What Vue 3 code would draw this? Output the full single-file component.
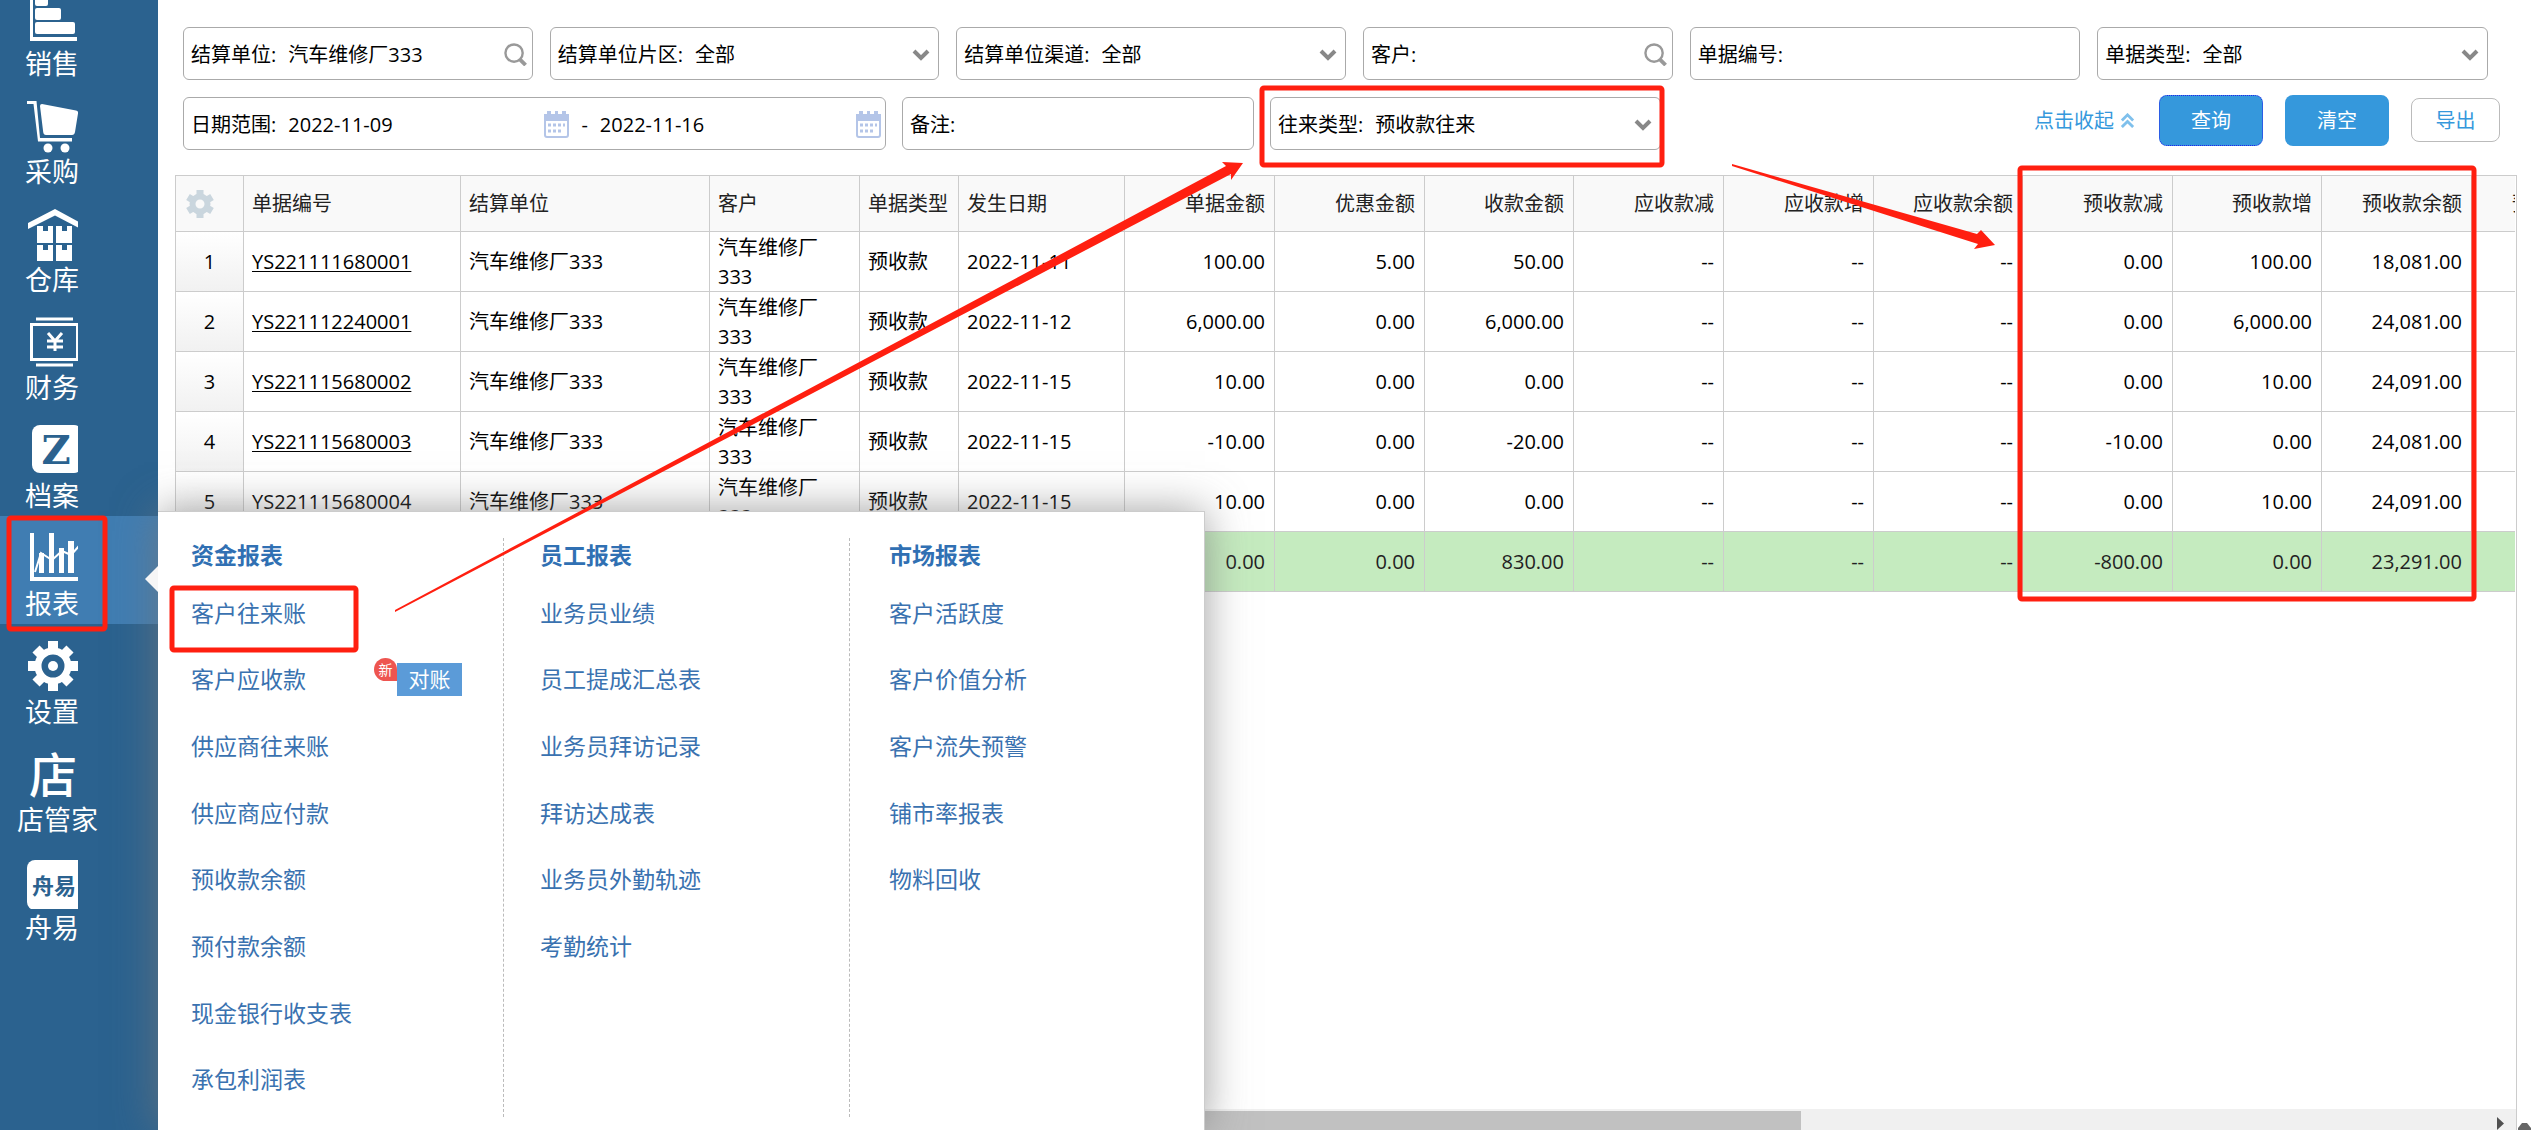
<script setup>
import { ref } from 'vue'

const unit = ref('汽车维修厂333')
const customer = ref('')
const billNo = ref('')
const memo = ref('')
const dateFrom = ref('2022-11-09')
const dateTo = ref('2022-11-16')

const columns = [
  { name: '单据编号', width: 217 },
  { name: '结算单位', width: 249 },
  { name: '客户', width: 150 },
  { name: '单据类型', width: 99 },
  { name: '发生日期', width: 166 },
  { name: '单据金额', width: 150, num: true },
  { name: '优惠金额', width: 150, num: true },
  { name: '收款金额', width: 149, num: true },
  { name: '应收款减', width: 150, num: true },
  { name: '应收款增', width: 150, num: true },
  { name: '应收款余额', width: 149, num: true },
  { name: '预收款减', width: 150, num: true },
  { name: '预收款增', width: 149, num: true },
  { name: '预收款余额', width: 150, num: true },
  { name: '预付款余额', width: 150, num: true }
]

const shop = '汽车维修厂333'
const rows = [
  ['YS221111680001', '2022-11-11', '100.00', '5.00', '50.00', '0.00', '100.00', '18,081.00'],
  ['YS221112240001', '2022-11-12', '6,000.00', '0.00', '6,000.00', '0.00', '6,000.00', '24,081.00'],
  ['YS221115680002', '2022-11-15', '10.00', '0.00', '0.00', '0.00', '10.00', '24,091.00'],
  ['YS221115680003', '2022-11-15', '-10.00', '0.00', '-20.00', '-10.00', '0.00', '24,081.00'],
  ['YS221115680004', '2022-11-15', '10.00', '0.00', '0.00', '0.00', '10.00', '24,091.00']
]
const totals = ['0.00', '0.00', '830.00', '--', '--', '--', '-800.00', '0.00', '23,291.00', '']

const menu = [
  {
    title: '资金报表',
    items: ['客户往来账', '客户应收款', '供应商往来账', '供应商应付款', '预收款余额', '预付款余额', '现金银行收支表', '承包利润表']
  },
  {
    title: '员工报表',
    items: ['业务员业绩', '员工提成汇总表', '业务员拜访记录', '拜访达成表', '业务员外勤轨迹', '考勤统计']
  },
  {
    title: '市场报表',
    items: ['客户活跃度', '客户价值分析', '客户流失预警', '铺市率报表', '物料回收']
  }
]
</script>

<template>
  <div class="page">
    <nav class="sidebar">
      <a href="#" class="nav-item">
        <svg class="nav-icon" viewBox="0 0 53 53" fill="#fff">
          <path d="M5 0h3v45h44v4H5z" />
          <rect x="10" y="4" width="13" height="10" rx="2" />
          <rect x="10" y="16" width="26" height="12" rx="2" />
          <rect x="10" y="30" width="40" height="12" rx="2" />
        </svg>
        <span class="nav-label">销售</span>
      </a>
      <a href="#" class="nav-item">
        <svg class="nav-icon" viewBox="0 0 53 53" fill="#fff">
          <path d="M2 1h9.500l3.500 37h32v3.500H13L8.500 4H2z" />
          <path d="M17 4l34 6.500q2.500.500 2 3L50 32q-.500 3-3 3H21q-2.500 0-2.800-3L15 6q0-2 2-2z" />
          <circle cx="23" cy="48" r="4.500" />
          <circle cx="40" cy="48" r="4.500" />
        </svg>
        <span class="nav-label">采购</span>
      </a>
      <a href="#" class="nav-item">
        <svg class="nav-icon" viewBox="0 0 53 53" fill="#fff">
          <path d="M3 15L30 1l26 14v6L30 7.500 3 21z" />
          <path d="M12 18h6v5h5v-5h5v17H12zM31 18h6v5h5v-5h5v17H31zM12 37h6v5h5v-5h5v17H12zM31 37h6v5h5v-5h5v17H31z" />
        </svg>
        <span class="nav-label">仓库</span>
      </a>
      <a href="#" class="nav-item">
        <svg class="nav-icon" viewBox="0 0 53 53" fill="none" stroke="#fff">
          <path d="M11 3h37M11 49h37" stroke-width="3" />
          <rect x="6.500" y="8.500" width="46" height="35" stroke-width="3" />
          <path d="M23 17l7 8 7-8M22 25h16M22 31h16M30 25v10" stroke-width="3" />
        </svg>
        <span class="nav-label">财务</span>
      </a>
      <a href="#" class="nav-item">
        <svg class="nav-icon" viewBox="0 0 53 53">
          <rect x="7" y="1" width="50" height="48" rx="8" fill="#fff" />
          <text x="31" y="40" class="glyph-z" text-anchor="middle">Z</text>
        </svg>
        <span class="nav-label">档案</span>
      </a>
      <a href="#" class="nav-item active">
        <svg class="nav-icon" viewBox="0 0 53 53" fill="#fff">
          <path d="M5 1h4v44h44v4H5z" />
          <path d="M14 21h5v20h-5zM24 1h5v40h-5zM34 16h5v25h-5zM43 9h6v32h-6z" />
          <path d="M10 40l6-19 11 7 10-9 9 4 8-9" fill="none" stroke="#fff" stroke-width="2" />
        </svg>
        <span class="nav-label">报表</span>
      </a>
      <a href="#" class="nav-item">
        <svg class="nav-icon" viewBox="0 0 53 53" fill="none" stroke="#fff">
          <circle cx="28" cy="26" r="15" stroke-width="7" />
          <path d="M28 1v9M28 42v9M3 26h9M44 26h9M11 9l5 5M45 9l-5 5M11 43l5-5M45 43l-5-5" stroke-width="10" />
          <circle cx="28" cy="26" r="5" fill="#fff" stroke="none" />
        </svg>
        <span class="nav-label">设置</span>
      </a>
      <a href="#" class="nav-item wide">
        <svg class="nav-icon" viewBox="0 0 53 53">
          <text x="28" y="45" class="glyph-shop" text-anchor="middle">店</text>
        </svg>
        <span class="nav-label">店管家</span>
      </a>
      <a href="#" class="nav-item">
        <svg class="nav-icon" viewBox="0 0 53 53">
          <rect x="2" y="4" width="58" height="50" rx="8" fill="#fff" />
          <text x="29" y="38" class="glyph-zy" text-anchor="middle">舟易</text>
        </svg>
        <span class="nav-label">舟易</span>
      </a>
    </nav>

    <main class="main">
      <form class="filters" @submit.prevent>
        <div class="filter-row first">
          <div class="field">
            <label for="unit">结算单位:</label>
            <input id="unit" v-model="unit" type="text" />
            <svg class="ico-search" viewBox="0 0 24 24" fill="none" stroke="#999">
              <circle cx="10.500" cy="10.500" r="9" stroke-width="2.500" />
              <path d="M16.500 17l6 6" stroke-width="4" />
            </svg>
          </div>
          <div class="field">
            <label for="area">结算单位片区:</label>
            <select id="area"><option>全部</option></select>
            <svg class="ico-chev" viewBox="0 0 18 12"><path d="M2 2l7 7 7-7" /></svg>
          </div>
          <div class="field">
            <label for="channel">结算单位渠道:</label>
            <select id="channel"><option>全部</option></select>
            <svg class="ico-chev" viewBox="0 0 18 12"><path d="M2 2l7 7 7-7" /></svg>
          </div>
          <div class="field">
            <label for="customer">客户:</label>
            <input id="customer" v-model="customer" type="text" />
            <svg class="ico-search" viewBox="0 0 24 24" fill="none" stroke="#999">
              <circle cx="10.500" cy="10.500" r="9" stroke-width="2.500" />
              <path d="M16.500 17l6 6" stroke-width="4" />
            </svg>
          </div>
          <div class="field">
            <label for="billno">单据编号:</label>
            <input id="billno" v-model="billNo" type="text" />
          </div>
          <div class="field">
            <label for="billtype">单据类型:</label>
            <select id="billtype"><option>全部</option></select>
            <svg class="ico-chev" viewBox="0 0 18 12"><path d="M2 2l7 7 7-7" /></svg>
          </div>
        </div>

        <div class="filter-row second">
          <div class="field dates">
            <label for="from">日期范围:</label>
            <input id="from" v-model="dateFrom" type="text" />
            <svg class="ico-cal" viewBox="0 0 25 27">
              <rect x="1" y="4" width="23" height="22" rx="2" fill="#fff" stroke="#b4c5e8" stroke-width="2" />
              <path d="M0 3h3V0h4v3h4V0h3v3h4V0h4v3h3v7H0z" fill="#b4c5e8" />
              <path d="M4 14h17M4 20h14" stroke="#b4c5e8" stroke-width="3" stroke-dasharray="3 2" />
            </svg>
            <label for="to">-</label>
            <input id="to" v-model="dateTo" type="text" />
            <svg class="ico-cal" viewBox="0 0 25 27">
              <rect x="1" y="4" width="23" height="22" rx="2" fill="#fff" stroke="#b4c5e8" stroke-width="2" />
              <path d="M0 3h3V0h4v3h4V0h3v3h4V0h4v3h3v7H0z" fill="#b4c5e8" />
              <path d="M4 14h17M4 20h14" stroke="#b4c5e8" stroke-width="3" stroke-dasharray="3 2" />
            </svg>
          </div>
          <div class="field">
            <label for="memo">备注:</label>
            <input id="memo" v-model="memo" type="text" />
          </div>
          <div class="field">
            <label for="dealtype">往来类型:</label>
            <select id="dealtype"><option>预收款往来</option></select>
            <svg class="ico-chev" viewBox="0 0 18 12"><path d="M2 2l7 7 7-7" /></svg>
          </div>
          <div class="actions">
            <a href="#" class="fold">点击收起
              <svg viewBox="0 0 16 16" fill="none" stroke="#7fc0ec" stroke-width="3"><path d="M2 8l6-6 6 6M2 15l6-6 6 6" /></svg>
            </a>
            <button type="submit" class="btn primary focus">查询</button>
            <button type="reset" class="btn primary">清空</button>
            <button type="button" class="btn plain">导出</button>
          </div>
        </div>
      </form>

      <section class="grid">
        <div class="grid-view">
          <table>
            <colgroup>
              <col class="col-no" />
              <col v-for="c in columns" :key="c.name" :style="{ width: c.width + 'px' }" />
            </colgroup>
            <thead>
              <tr>
                <th class="no">
                  <svg class="gear" viewBox="0 0 28 28" fill="none" stroke="#cad6de">
                    <circle cx="14" cy="14" r="7.500" stroke-width="6" />
                    <path d="M14 0v6M14 22v6M2 7l5 3M26 7l-5 3M2 21l5-3M26 21l-5-3" stroke-width="7" />
                  </svg>
                </th>
                <th v-for="c in columns" :key="c.name" :class="{ num: c.num }">{{ c.name }}</th>
              </tr>
            </thead>
            <tbody>
              <tr v-for="(r, i) in rows" :key="r[0]">
                <td class="no">{{ i + 1 }}</td>
                <td><a href="#" class="bill">{{ r[0] }}</a></td>
                <td>{{ shop }}</td>
                <td class="wrap">{{ shop }}</td>
                <td>预收款</td>
                <td>{{ r[1] }}</td>
                <td v-for="n in [2, 3, 4]" :key="n" class="num">{{ r[n] }}</td>
                <td v-for="n in 3" :key="'d' + n" class="num">--</td>
                <td v-for="n in [5, 6, 7]" :key="n" class="num">{{ r[n] }}</td>
                <td class="num"></td>
              </tr>
            </tbody>
            <tfoot>
              <tr>
                <td colspan="6"></td>
                <td v-for="(t, i) in totals" :key="i" class="num">{{ t }}</td>
              </tr>
            </tfoot>
          </table>
        </div>
        <div class="scrollbar">
          <div class="thumb"></div>
          <svg class="sb-arrow" viewBox="0 0 7 13"><path d="M0 0l7 6.500L0 13z" fill="#505050" /></svg>
        </div>
      </section>
      <svg class="corner" viewBox="0 0 13 7"><path d="M4 0h5l4 5v2H0V5z" fill="#666" /></svg>
    </main>

    <aside class="menu">
      <section v-for="(g, gi) in menu" :key="g.title" class="menu-col">
        <h3>{{ g.title }}</h3>
        <ul>
          <li v-for="(m, mi) in g.items" :key="m">
            <a href="#">{{ m }}</a>
            <span v-if="gi === 0 && mi === 1" class="tag">
              <i class="new">新</i>
              <button type="button">对账</button>
            </span>
          </li>
        </ul>
      </section>
    </aside>

    <svg class="marks" fill="none" stroke="#ff1f10" stroke-width="5">
      <rect x="9" y="518" width="96" height="111" rx="2" />
      <rect x="172" y="588" width="184" height="62" rx="2" />
      <rect x="1262" y="88" width="400" height="77" rx="2" />
      <rect x="2020" y="168" width="454" height="431" rx="2" />
      <g fill="#ff1f10" stroke="none">
        <path d="M395 610L1226 166L1222 162L1243 163L1231 180L1231 174L395 612z" />
        <path d="M1732 164L1977 234L1981 230L1995 245L1974 249L1978 244L1732 166z" />
      </g>
    </svg>
  </div>
</template>

<style>
body {
  background: #fff;
}
</style>

<style scoped>
* {
  box-sizing: border-box;
}
.page {
  position: relative;
  display: flex;
  min-height: 100vh;
  overflow: hidden;
  font: 20px/29px "Open Sans", "Noto Sans CJK SC", sans-serif;
  color: #000;
}
a {
  text-decoration: none;
}
.sidebar {
  flex: 0 0 158px;
  margin-top: -24px;
  background: #2b628f;
}
.nav-item {
  display: flex;
  flex-direction: column;
  height: 108px;
  padding: 16px 0 0 25px;
  color: #fff;
  font-size: 27px;
  line-height: 38px;
}
.nav-item.active {
  background: #407db2;
}
.nav-icon {
  width: 53px;
  height: 53px;
  overflow: hidden;
}
.wide .nav-label {
  margin-left: -8px;
}
.glyph-z {
  font: bold 40px "DejaVu Serif", serif;
  fill: #2b628f;
}
.glyph-shop {
  font: 500 48px "Noto Sans CJK SC", sans-serif;
  fill: #fff;
}
.glyph-zy {
  font: bold 22px "Noto Sans CJK SC", sans-serif;
  fill: #2b628f;
}
.main {
  position: relative;
  display: flex;
  flex: 1;
  flex-direction: column;
  min-width: 0;
  padding: 27px 14px 0 17px;
}
.filters {
  display: flex;
  flex-direction: column;
  gap: 17px;
  padding: 0 29px 25px 8px;
}
.filter-row {
  display: grid;
}
.first {
  grid-template-columns: 350fr 390fr 390fr 310fr 391fr 391fr;
  gap: 17px;
}
.second {
  grid-template-columns: 703fr 352fr 391fr 823fr;
  gap: 16px;
  margin-right: -12px;
}
.field {
  display: flex;
  align-items: center;
  gap: 12px;
  min-width: 0;
  height: 53px;
  padding: 2px 8px 0 7px;
  border: 1px solid #aaa;
  border-radius: 6px;
}
.dates {
  padding-right: 4px;
}
.field label {
  flex: none;
}
.field input,
.field select {
  flex: 1;
  min-width: 0;
  padding: 0;
  border: 0;
  outline: 0;
  background: none;
  appearance: none;
  color: inherit;
  font: inherit;
}
.ico-search {
  flex: none;
  width: 23px;
  height: 23px;
  margin-right: -3px;
}
.ico-chev {
  flex: none;
  width: 18px;
  height: 12px;
  fill: none;
  stroke: #888;
  stroke-width: 4;
}
.ico-cal {
  flex: none;
  width: 25px;
  height: 27px;
}
.actions {
  display: flex;
  align-items: center;
  justify-content: flex-end;
  height: 46px;
}
.fold {
  display: flex;
  align-items: center;
  gap: 6px;
  margin-right: 24px;
  color: #3598dc;
}
.fold svg {
  width: 15px;
  height: 15px;
}
.btn {
  width: 104px;
  height: 51px;
  margin-right: 22px;
  padding: 0;
  border: 0;
  border-radius: 8px;
  font: inherit;
}
.primary {
  background: #3598dc;
  color: #fff;
}
.focus {
  border: 1px dotted #22e;
}
.plain {
  width: 89px;
  height: 44px;
  margin-right: 0;
  border: 1px solid #bbb;
  background: #fff;
  color: #3598dc;
}
.grid {
  display: flex;
  flex: 1;
  flex-direction: column;
  border: 1px solid #ccc;
  border-bottom: 0;
}
.grid-view {
  flex: 1;
  margin-right: 1px;
  overflow: hidden;
}
table {
  width: 2446px;
  table-layout: fixed;
  border-collapse: separate;
  border-spacing: 0;
}
.col-no {
  width: 68px;
}
th,
td {
  height: 60px;
  padding: 0 9px 0 8px;
  border-right: 1px solid #ccc;
  border-bottom: 1px solid #ccc;
  text-align: left;
  font-weight: 400;
  white-space: nowrap;
}
th {
  height: 56px;
  background: #f9f9f9;
  color: #222;
}
.num {
  text-align: right;
}
.no {
  padding: 0;
  background: linear-gradient(#fff, #f1f1f1);
  text-align: center;
}
th.no {
  background: #f9f9f9;
}
td.wrap {
  white-space: normal;
}
.gear {
  display: block;
  width: 28px;
  height: 28px;
  margin-left: 10px;
}
.bill {
  color: #000;
  text-decoration: underline;
  text-decoration-thickness: 1px;
  text-underline-offset: 2px;
}
tfoot td {
  background: #c5ebbf;
  color: #222;
}
.scrollbar {
  display: flex;
  align-items: flex-end;
  justify-content: space-between;
  height: 21px;
  padding-right: 12px;
  background: #f0f0f0;
}
.thumb {
  width: 69.8%;
  height: 19px;
  background: #c1c1c1;
}
.sb-arrow {
  width: 7px;
  height: 13px;
}
.corner {
  position: absolute;
  right: 0;
  bottom: 0;
  width: 13px;
  height: 7px;
}
.menu {
  position: absolute;
  top: 511px;
  bottom: 0;
  left: 158px;
  display: flex;
  width: 1047px;
  padding: 26px 0 13px;
  border: solid #ccc;
  border-width: 1px 1px 0 0;
  background: #fff;
  box-shadow: 0 0 40px rgba(120, 120, 120, 0.7);
  font-size: 23px;
}
.menu::before {
  position: absolute;
  top: 54px;
  left: -13px;
  border: solid transparent;
  border-width: 13px 13px 13px 0;
  border-right-color: #f6f6f6;
  content: "";
}
.menu-col {
  display: flex;
  flex: 0 0 346px;
  flex-direction: column;
  padding-left: 33px;
  border-right: 1px dashed #bbb;
}
.menu-col + .menu-col {
  padding-left: 36px;
}
.menu-col + .menu-col + .menu-col {
  padding-left: 39px;
  border-right: 0;
}
.menu h3 {
  margin: 0;
  padding-top: 3px;
  color: #3070b3;
  font-size: 23px;
  line-height: 28px;
}
.menu ul {
  display: grid;
  flex: 1;
  grid-template-rows: repeat(8, 1fr);
  margin: 0;
  padding: 11px 0 4px;
  list-style: none;
}
.menu li {
  display: flex;
  align-items: center;
  justify-content: space-between;
  padding-right: 41px;
}
.menu li a {
  color: #3a72b0;
}
.tag {
  display: flex;
}
.new {
  width: 23px;
  height: 23px;
  margin-top: -5px;
  border-radius: 12px 12px 0 12px;
  background: #ee5550;
  color: #fff;
  font-size: 14px;
  font-style: normal;
  line-height: 23px;
  text-align: center;
}
.tag button {
  width: 65px;
  height: 33px;
  padding: 0;
  border: 0;
  background: #5b9bd8;
  color: #fff;
  font: inherit;
  font-size: 21px;
  line-height: 33px;
}
.marks {
  position: absolute;
  top: 0;
  left: 0;
  width: 100%;
  height: 100%;
  pointer-events: none;
}
</style>
